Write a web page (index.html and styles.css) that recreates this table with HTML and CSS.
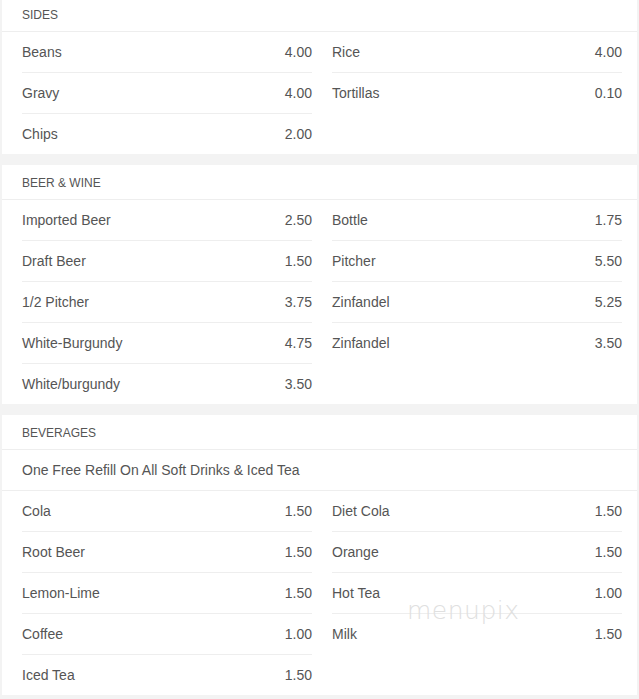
FILE: index.html
```html
<!DOCTYPE html>
<html>
<head>
<meta charset="utf-8">
<link rel="stylesheet" href="styles.css">
</head>
<body>
<div class="page">
  <section class="card first">
    <div class="head">SIDES</div>
    <div class="cols">
      <ul class="col">
        <li><span>Beans</span><span>4.00</span></li>
        <li><span>Gravy</span><span>4.00</span></li>
        <li><span>Chips</span><span>2.00</span></li>
      </ul>
      <ul class="col">
        <li><span>Rice</span><span>4.00</span></li>
        <li><span>Tortillas</span><span>0.10</span></li>
      </ul>
    </div>
  </section>
  <section class="card">
    <div class="head">BEER &amp; WINE</div>
    <div class="cols">
      <ul class="col">
        <li><span>Imported Beer</span><span>2.50</span></li>
        <li><span>Draft Beer</span><span>1.50</span></li>
        <li><span>1/2 Pitcher</span><span>3.75</span></li>
        <li><span>White-Burgundy</span><span>4.75</span></li>
        <li><span>White/burgundy</span><span>3.50</span></li>
      </ul>
      <ul class="col">
        <li><span>Bottle</span><span>1.75</span></li>
        <li><span>Pitcher</span><span>5.50</span></li>
        <li><span>Zinfandel</span><span>5.25</span></li>
        <li><span>Zinfandel</span><span>3.50</span></li>
      </ul>
    </div>
  </section>
  <section class="card">
    <div class="head">BEVERAGES</div>
    <div class="note">One Free Refill On All Soft Drinks &amp; Iced Tea</div>
    <div class="cols">
      <ul class="col">
        <li><span>Cola</span><span>1.50</span></li>
        <li><span>Root Beer</span><span>1.50</span></li>
        <li><span>Lemon-Lime</span><span>1.50</span></li>
        <li><span>Coffee</span><span>1.00</span></li>
        <li><span>Iced Tea</span><span>1.50</span></li>
      </ul>
      <ul class="col">
        <li><span>Diet Cola</span><span>1.50</span></li>
        <li><span>Orange</span><span>1.50</span></li>
        <li><span>Hot Tea</span><span>1.00</span></li>
        <li><span>Milk</span><span>1.50</span></li>
      </ul>
    </div>
    <div class="watermark">menupix</div>
  </section>
</div>
</body>
</html>
```
FILE: styles.css
```css
html, body {
  margin: 0;
  padding: 0;
  background: #f3f3f3;
}
body {
  font-family: "Liberation Sans", Arial, sans-serif;
  color: #555;
}
.page {
  display: flex;
  flex-direction: column;
  gap: 11px;
  padding: 0 2px 0 2px;
}
.card {
  position: relative;
  background: #fff;
}
.card.first {
  margin-top: -3px;
}
.head {
  height: 35px;
  box-sizing: border-box;
  border-bottom: 1px solid #eeeeee;
  padding-left: 20px;
  padding-top: 2px;
  font-size: 12px;
  display: flex;
  align-items: center;
  color: #555;
}
.note {
  height: 40px;
  border-bottom: 1px solid #eeeeee;
  padding-left: 20px;
  font-size: 14px;
  display: flex;
  align-items: center;
}
.cols {
  display: flex;
  gap: 20px;
  padding: 0 15px 0 20px;
}
.col {
  list-style: none;
  margin: 0;
  padding: 0;
  flex: 1;
}
.col li {
  height: 40px;
  display: flex;
  justify-content: space-between;
  align-items: center;
  font-size: 14px;
  border-bottom: 1px solid #eeeeee;
}
.col li:last-child {
  border-bottom: none;
}
.watermark {
  position: absolute;
  left: 405px;
  top: 181px;
  font-family: "DejaVu Sans", sans-serif;
  font-size: 25px;
  font-weight: 200;
  letter-spacing: 0.5px;
  color: #e0e0e0;
  pointer-events: none;
}
```
